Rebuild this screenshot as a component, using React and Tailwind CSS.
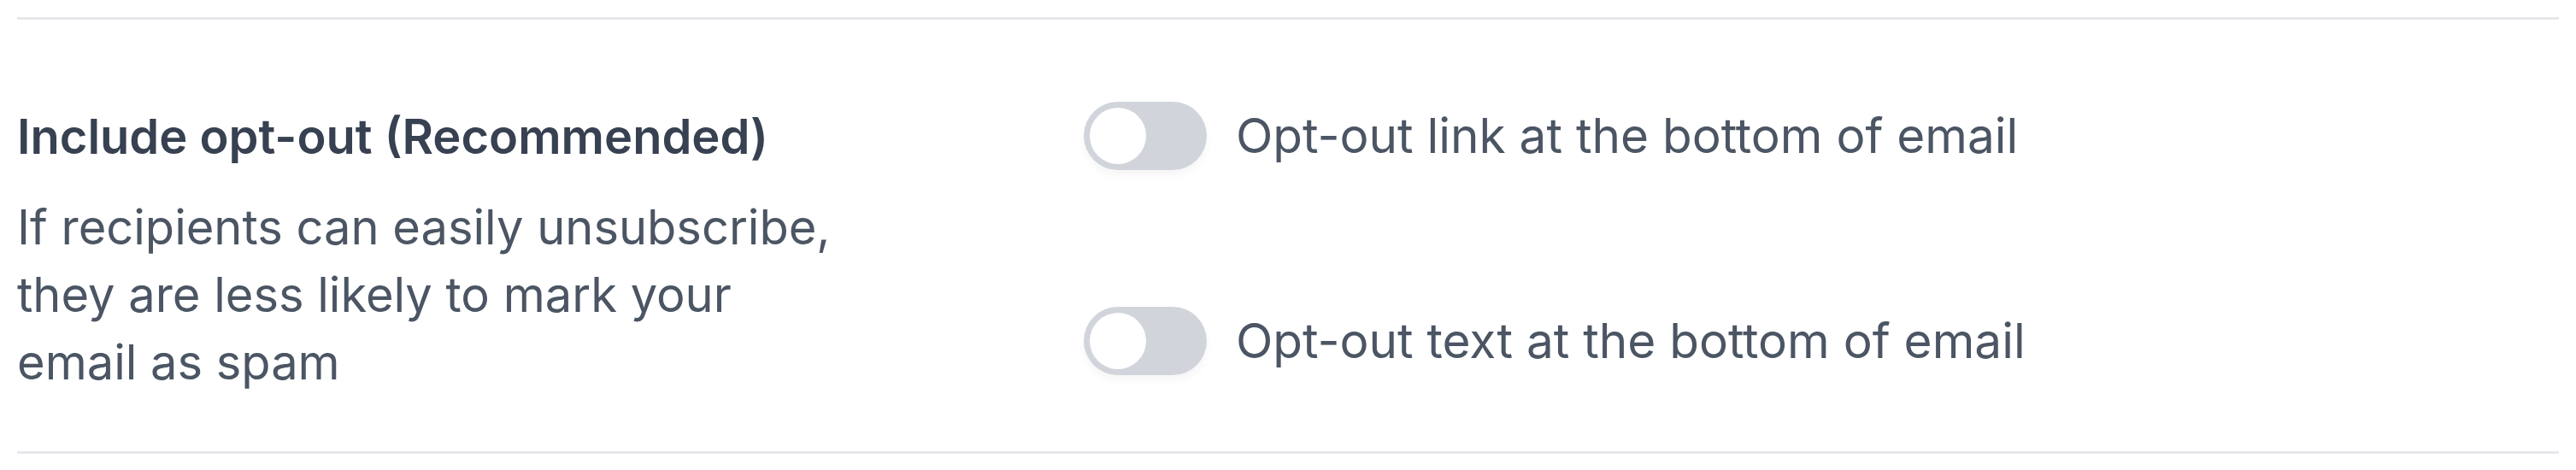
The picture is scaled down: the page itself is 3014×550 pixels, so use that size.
import { useState } from 'react'

function Toggle({ checked, onChange }) {
  return (
    <button
      type="button"
      onClick={() => onChange(!checked)}
      className={`relative flex-shrink-0 w-[144px] h-[80px] rounded-full shadow-[0_6px_10px_rgba(0,0,0,0.04)] transition-colors ${checked ? 'bg-[#6366f1]' : 'bg-[#d1d5db]'}`}
    >
      <span
        className={`absolute top-[7px] left-[7px] w-[66px] h-[66px] rounded-full bg-white transition-transform ${checked ? 'translate-x-[64px]' : 'translate-x-0'}`}
      />
    </button>
  )
}

export default function App() {
  const [link, setLink] = useState(false)
  const [text, setText] = useState(false)

  const options = [
    { label: 'Opt-out link at the bottom of email', value: link, set: setLink },
    { label: 'Opt-out text at the bottom of email', value: text, set: setText },
  ]

  return (
    <div className="bg-white px-[20px] pt-[20px]" style={{ fontFamily: 'Inter, "Noto Sans", sans-serif' }}>
      <div className="flex border-y-[3px] border-[#e5e7eb] h-[511px]">
        <div className="w-[1248px] pt-[97px]">
          <h3 className="text-[56px] leading-[80px] font-semibold text-[#374151]">
            Include opt-out (Recommended)
          </h3>
          <p className="mt-[27px] max-w-[965px] text-[56px] leading-[79px] text-[#4b5563]">
            If recipients can easily unsubscribe, they are less likely to mark your email as spam
          </p>
        </div>
        <div className="flex flex-col gap-[160px] pt-[96px]">
          {options.map(o => (
            <div key={o.label} className="flex items-center gap-[34px]">
              <Toggle checked={o.value} onChange={o.set} />
              <span className="text-[56.7px] leading-[80px] text-[#4b5563]">{o.label}</span>
            </div>
          ))}
        </div>
      </div>
    </div>
  )
}
